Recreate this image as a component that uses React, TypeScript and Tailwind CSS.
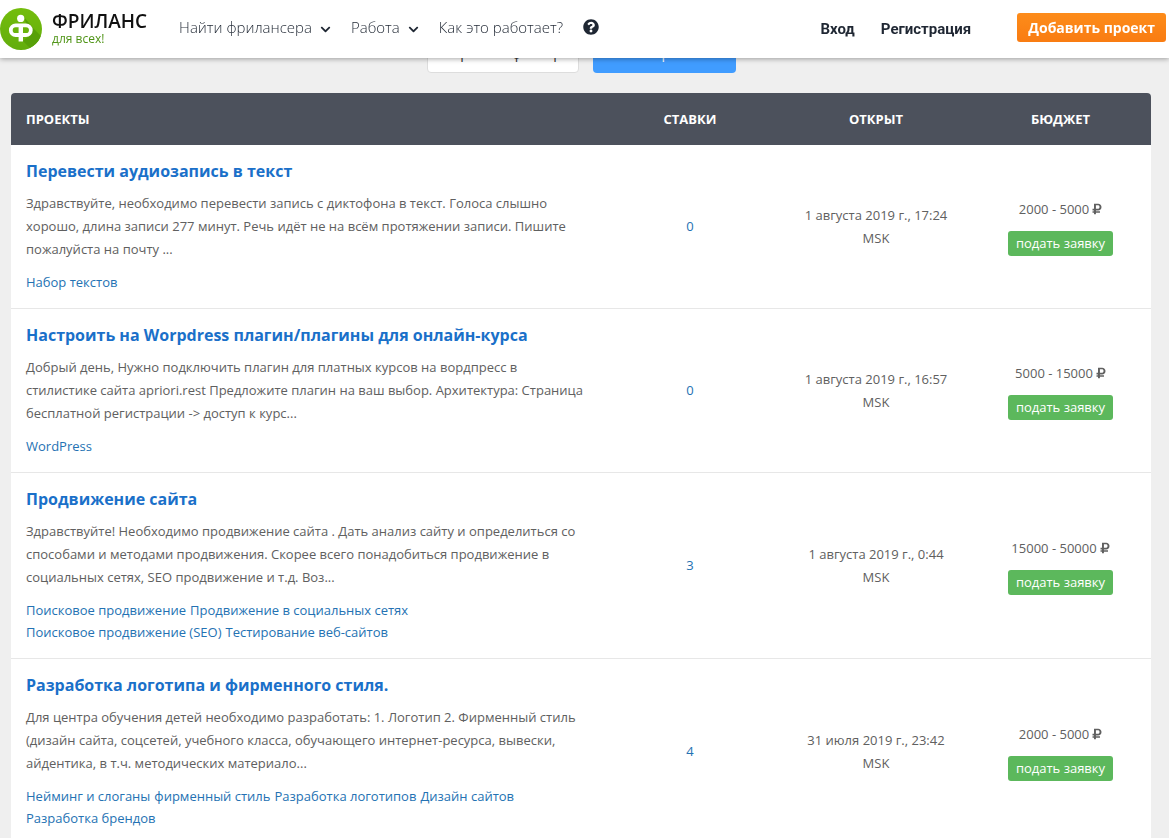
//Libraries Imports
import { FaChevronDown, FaQuestionCircle, FaRubleSign } from "react-icons/fa";

type Project = {
  title: string;
  description: string;
  tags: string[];
  bids: number;
  opened: string;
  budget: string;
};

const projects: Project[] = [
  {
    title: "Перевести аудиозапись в текст",
    description:
      "Здравствуйте, необходимо перевести запись с диктофона в текст. Голоса слышно хорошо, длина записи 277 минут. Речь идёт не на всём протяжении записи. Пишите пожалуйста на почту ...",
    tags: ["Набор текстов"],
    bids: 0,
    opened: "1 августа 2019 г., 17:24",
    budget: "2000 - 5000",
  },
  {
    title: "Настроить на Worpdress плагин/плагины для онлайн-курса",
    description:
      "Добрый день, Нужно подключить плагин для платных курсов на вордпресс в стилистике сайта apriori.rest Предложите плагин на ваш выбор. Архитектура: Страница бесплатной регистрации -> доступ к курс...",
    tags: ["WordPress"],
    bids: 0,
    opened: "1 августа 2019 г., 16:57",
    budget: "5000 - 15000",
  },
  {
    title: "Продвижение сайта",
    description:
      "Здравствуйте! Необходимо продвижение сайта . Дать анализ сайту и определиться со способами и методами продвижения. Скорее всего понадобиться продвижение в социальных сетях, SEO продвижение и т.д. Воз...",
    tags: [
      "Поисковое продвижение",
      "Продвижение в социальных сетях",
      "Поисковое продвижение (SEO)",
      "Тестирование веб-сайтов",
    ],
    bids: 3,
    opened: "1 августа 2019 г., 0:44",
    budget: "15000 - 50000",
  },
  {
    title: "Разработка логотипа и фирменного стиля.",
    description:
      "Для центра обучения детей необходимо разработать: 1. Логотип 2. Фирменный стиль (дизайн сайта, соцсетей, учебного класса, обучающего интернет-ресурса, вывески, айдентика, в т.ч. методических материало...",
    tags: [
      "Нейминг и слоганы",
      "фирменный стиль",
      "Разработка логотипов",
      "Дизайн сайтов",
      "Разработка брендов",
    ],
    bids: 4,
    opened: "31 июля 2019 г., 23:42",
    budget: "2000 - 5000",
  },
];

function Logo() {
  return (
    <a href="#" className="flex items-center gap-[10px]">
      <svg viewBox="0 0 42 42" className="h-[42px] w-[42px]" aria-hidden="true">
        <defs>
          <clipPath id="disc">
            <circle cx="21" cy="21" r="21" />
          </clipPath>
          <linearGradient id="green" x1="0" y1="0" x2="0" y2="1">
            <stop offset="0" stopColor="#74bd0c" />
            <stop offset="1" stopColor="#62ad0c" />
          </linearGradient>
        </defs>
        <circle cx="21" cy="21" r="21" fill="url(#green)" />
        <path
          clipPath="url(#disc)"
          fill="#57a008"
          d="M24 9 L33 20 L44 31 L36 46 L23 33 L30 27 Z"
        />
        <circle cx="20.7" cy="10.4" r="3.6" fill="#fff" />
        <rect
          x="10.8"
          y="17.4"
          width="20"
          height="9.6"
          rx="4.8"
          fill="none"
          stroke="#fff"
          strokeWidth="3.8"
        />
        <path stroke="#fff" strokeWidth="4.4" d="M20.8 16 V33.500" />
      </svg>
      <span className="flex flex-col">
        <span className="text-[19px] leading-5 font-semibold text-[#111]">
          ФРИЛАНС
        </span>
        <span className="text-[12px] leading-4 text-[#4f9416]">для всех!</span>
      </span>
    </a>
  );
}

function Header() {
  return (
    <header className="fixed inset-x-0 top-0 z-10 flex h-[58px] items-center bg-white pr-[3px] shadow-[0_1px_5px_rgba(0,0,0,0.35)]">
      <Logo />
      <nav className="ml-8 flex items-center gap-5 pb-1 text-[15px] font-light text-[#1f2733]">
        <a href="#" className="flex items-center gap-2">
          Найти фрилансера
          <FaChevronDown className="mt-1 h-[11px] w-[11px]" />
        </a>
        <a href="#" className="flex items-center gap-2">
          Работа
          <FaChevronDown className="mt-1 h-[11px] w-[11px]" />
        </a>
        <a href="#">Как это работает?</a>
        <a href="#" aria-label="Помощь">
          <FaQuestionCircle className="h-4 w-4" />
        </a>
      </nav>
      <div className="ml-auto flex items-center">
        <a
          href="#"
          className="mr-[26px] font-[Roboto,sans-serif] text-[15px] font-bold text-[#1f2733]"
        >
          Вход
        </a>
        <a
          href="#"
          className="mr-[46px] font-[Roboto,sans-serif] text-[15px] font-bold text-[#1f2733]"
        >
          Регистрация
        </a>
        <button className="mb-1 h-[29px] rounded-[3px] bg-linear-to-b from-[#fd8c1a] to-[#f97c12] px-[11px] text-[14px] font-bold text-white">
          Добавить проект
        </button>
      </div>
    </header>
  );
}

function ProjectRow({ project }: { project: Project }) {
  return (
    <tr className="border-b border-[#e7e7e7]">
      <td className="py-[15px] pr-2 pl-[15px]">
        <h2 className="text-[16px] leading-[22px] font-bold text-[#1a70c9]">
          <a href="#">{project.title}</a>
        </h2>
        <p className="my-[10px]">{project.description}</p>
        <ul className="flex flex-wrap gap-x-1 leading-[22px] text-[#2472b3]">
          {project.tags.map((tag) => (
            <li key={tag}>
              <a href="#">{tag}</a>
            </li>
          ))}
        </ul>
      </td>
      <td className="text-center text-[#2472b3]">
        <a href="#">{project.bids}</a>
      </td>
      <td className="px-[15px] text-center">
        {project.opened}
        <br />
        MSK
      </td>
      <td className="text-center">
        <div className="flex items-center justify-center gap-[3px]">
          {project.budget}
          <FaRubleSign className="h-3 w-[10px]" />
        </div>
        <button className="mx-auto mt-[10px] block h-[25px] rounded-[3px] bg-[#5cb85c] px-2 text-white">
          подать заявку
        </button>
      </td>
    </tr>
  );
}

export default function App() {
  return (
    <div className="min-h-screen bg-[#efefef] font-['Open_Sans',sans-serif] text-[13px] leading-[23px] text-[#606060]">
      <Header />
      <main className="pt-[31px] pr-[18px] pl-[11px]">
        <div className="mb-5 flex justify-center gap-[14px] text-[14px]">
          <button className="h-[42px] w-[152px] rounded-[4px] border border-[#ddd] bg-white text-[#333]">
            Сбросить фильтр
          </button>
          <button className="h-[42px] w-[143px] rounded-[4px] bg-[#409cff] text-white">
            Фильтровать
          </button>
        </div>
        <div className="overflow-hidden rounded-t-[4px] bg-white">
          <table className="w-full table-fixed">
            <thead>
              <tr className="h-[52px] bg-[#4c515c] text-white uppercase">
                <th className="px-[15px] text-left font-bold">Проекты</th>
                <th className="w-[184px] font-bold">Ставки</th>
                <th className="w-[188px] font-bold">Открыт</th>
                <th className="w-[181px] font-bold">Бюджет</th>
              </tr>
            </thead>
            <tbody>
              {projects.map((project) => (
                <ProjectRow key={project.title} project={project} />
              ))}
            </tbody>
          </table>
        </div>
      </main>
    </div>
  );
}
